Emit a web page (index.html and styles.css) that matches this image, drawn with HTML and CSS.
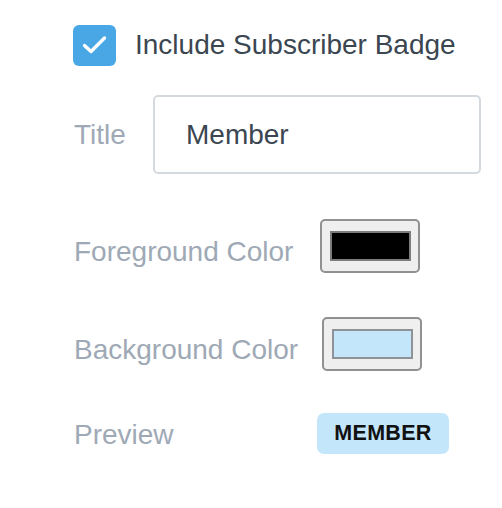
FILE: index.html
```html
<!DOCTYPE html>
<html>
<head>
<meta charset="utf-8">
<link rel="stylesheet" href="styles.css">
</head>
<body>
<div class="panel">
  <div class="check-row">
    <span class="checkbox">
      <svg width="43" height="41" viewBox="0 0 43 41"><path d="M11.5 20.5 L18 26.5 L31.5 13" fill="none" stroke="#fff" stroke-width="3.4" stroke-linecap="round" stroke-linejoin="round"/></svg>
    </span>
    <span class="check-label">Include Subscriber Badge</span>
  </div>
  <div class="title-row">
    <span class="label">Title</span>
    <div class="text-input">Member</div>
  </div>
  <div class="row row-fg">
    <span class="label label-wide">Foreground Color</span>
    <div class="swatch swatch-fg"><div class="swatch-fill fill-black"></div></div>
  </div>
  <div class="row row-bg">
    <span class="label label-wide">Background Color</span>
    <div class="swatch swatch-bg"><div class="swatch-fill fill-blue"></div></div>
  </div>
  <div class="row row-preview">
    <span class="label label-wide label-preview">Preview</span>
    <span class="badge">MEMBER</span>
  </div>
</div>
</body>
</html>
```
FILE: styles.css
```css
html, body {
  margin: 0;
  padding: 0;
  background: #ffffff;
}
body {
  font-family: "Liberation Sans", Arial, sans-serif;
  font-size: 28px;
  color: #3b4651;
}
.panel {
  padding: 25px 0 0 73px;
  display: flex;
  flex-direction: column;
}
.check-row {
  display: flex;
  align-items: center;
  gap: 19px;
  height: 40px;
}
.checkbox {
  width: 43px;
  height: 41px;
  border-radius: 6px;
  background: #4aa7e6;
  display: flex;
  box-sizing: border-box;
}
.checkbox svg {
  display: block;
}
.check-label {
  color: #3b4651;
  line-height: 32px;
}
.title-row {
  display: flex;
  align-items: center;
  margin-top: 30px;
}
.label {
  color: #9ea9b5;
  line-height: 32px;
  margin-left: 1px;
}
.title-row .label {
  width: 79px;
}
.text-input {
  box-sizing: border-box;
  width: 328px;
  height: 79px;
  border: 2px solid #d3d9df;
  border-radius: 5px;
  padding-left: 31px;
  display: flex;
  align-items: center;
  color: #3b4651;
}
.row {
  display: flex;
  align-items: center;
}
.row-fg {
  margin-top: 45px;
}
.row-bg {
  margin-top: 44px;
}
.row-preview {
  margin-top: 42px;
}
.label-wide {
  width: 243px;
  padding-top: 11px;
}
.label-preview {
  padding-top: 2px;
}
.swatch {
  box-sizing: border-box;
  width: 100px;
  height: 54px;
  border: 2px solid #919191;
  border-radius: 5px;
  background: #efefef;
  padding: 10px 7px 10px 8px;
  display: flex;
}
.swatch-fg {
  margin-left: 3px;
}
.swatch-bg {
  margin-left: 5px;
}
.swatch-fill {
  flex: 1;
  border: 2px solid #7c7c7c;
}
.fill-black {
  background: #000000;
}
.fill-blue {
  background: #c3e6fb;
  border-color: #8d9396;
}
.badge {
  box-sizing: border-box;
  width: 132px;
  height: 41px;
  border-radius: 7px;
  background: #c3e6fb;
  color: #111111;
  font-weight: bold;
  font-size: 21.5px;
  display: flex;
  align-items: center;
  justify-content: center;
  letter-spacing: 0.3px;
}
```
